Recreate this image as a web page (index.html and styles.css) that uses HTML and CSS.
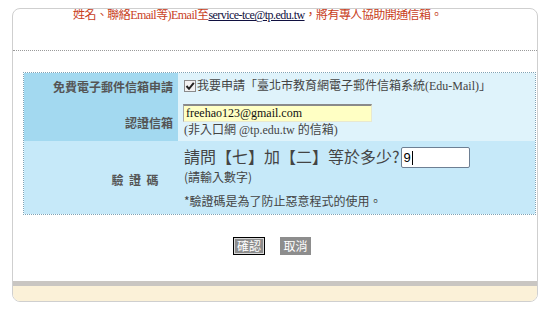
FILE: index.html
```html
<!DOCTYPE html>
<html lang="zh-Hant">
<head>
<meta charset="utf-8">
<title>免費電子郵件信箱申請</title>
<link rel="stylesheet" href="styles.css">
</head>
<body>
<div class="panel">
  <div class="notice">姓名、聯絡Email等)Email至<a class="mail-link" href="#">service-tce@tp.edu.tw</a>，將有專人協助開通信箱。</div>
  <div class="divider"></div>
  <form class="apply-form">
    <div class="label label-dark row1">免費電子郵件信箱申請</div>
    <div class="field field-light row1">
      <span class="checkbox"><svg width="10" height="10" viewBox="0 0 10 10"><path d="M1.5 5 L4 7.8 L8.8 1.8" fill="none" stroke="#222" stroke-width="2"/></svg></span><span class="check-text">我要申請「臺北市教育網電子郵件信箱系統(Edu-Mail)」</span>
    </div>
    <div class="label label-dark row2">認證信箱</div>
    <div class="field field-light row2">
      <div class="email-input">freehao123@gmail.com</div>
      <div class="hint">(非入口網 @tp.edu.tw 的信箱)</div>
    </div>
    <div class="label label-mid label-spaced row3"><span>驗證碼</span></div>
    <div class="field field-mid row3">
      <div class="question"><span class="question-text">請問【七】加【二】等於多少?</span><span class="captcha-input">9<span class="caret"></span></span></div>
      <div class="hint small">(請輸入數字)</div>
      <div class="hint note">*驗證碼是為了防止惡意程式的使用。</div>
    </div>
  </form>
  <div class="actions">
    <span class="btn btn-focus">確認</span>
    <span class="btn">取消</span>
  </div>
  <div class="spacer"></div>
  <div class="footer-bar"></div>
  <div class="footer-cream"></div>
</div>
</body>
</html>
```

FILE: styles.css
```css
html, body {
  margin: 0;
  padding: 0;
  background: #ffffff;
}

body {
  font-family: "Liberation Serif", "Noto Sans CJK TC", serif;
  font-size: 12px;
  color: #444;
}

.panel {
  box-sizing: border-box;
  margin: 8px 0 0 12px;
  width: 526px;
  height: 294px;
  border: 1px solid #cfcfcf;
  border-radius: 8px;
  overflow: hidden;
  display: flex;
  flex-direction: column;
  background: #fff;
}

.notice {
  height: 41px;
  padding-left: 60px;
  line-height: 12px;
  color: #c8401c;
  white-space: nowrap;
  letter-spacing: -0.55px;
}

.mail-link {
  color: #101040;
  text-decoration: underline;
}

.divider {
  border-top: 1px dotted #9a9a9a;
}

.apply-form {
  margin: 21px 1px 0 10px;
  border: 1px dotted #7fa3b5;
  display: grid;
  grid-template-columns: 154px 1fr;
}

.label {
  display: flex;
  align-items: center;
  justify-content: flex-end;
  padding-right: 5px;
  font-family: "Noto Sans CJK TC", sans-serif;
  font-weight: bold;
  color: #555;
  font-size: 12px;
}

.label-dark {
  background: #a3d9f0;
}

.label-mid {
  background: #c6e9f9;
}

.label-spaced {
  padding-right: 14px;
  padding-top: 4px;
  letter-spacing: 5.5px;
}

.field {
  padding-left: 6px;
}

.field-light {
  background: #dff3fb;
}

.field-mid {
  background: #c6e9f9;
}

.row1.label {
  padding-top: 2px;
}

.row1.field {
  height: 24px;
  box-sizing: border-box;
  padding-top: 6px;
  display: flex;
  align-items: flex-start;
  line-height: 14px;
}

.checkbox {
  box-sizing: border-box;
  width: 12px;
  height: 12px;
  margin-top: 1px;
  margin-right: 1px;
  border: 1px solid #8a8a8a;
  background: #f2f2f2;
  display: flex;
  align-items: center;
  justify-content: center;
}

.check-text {
  color: #444;
  white-space: nowrap;
}

.row2.label {
  padding-top: 6px;
}

.row2.field {
  height: 44px;
  box-sizing: border-box;
  padding-top: 7px;
}

.email-input {
  box-sizing: border-box;
  width: 189px;
  height: 18px;
  margin-left: -1px;
  background: #ffffc4;
  border-top: 2px solid #8a8a8a;
  border-left: 1px solid #a8a8a8;
  border-right: 1px solid #e8e8d0;
  border-bottom: 1px solid #e8e8d0;
  padding-left: 2px;
  line-height: 14px;
  color: #111;
  font-size: 12px;
}

.hint {
  margin-top: 1px;
  line-height: 14px;
  color: #444;
  white-space: nowrap;
}

.row3.field {
  height: 73px;
  box-sizing: border-box;
  padding-top: 6px;
}

.question {
  display: flex;
  align-items: flex-start;
  height: 21px;
  white-space: nowrap;
}

.question-text {
  font-family: "Noto Sans CJK TC", sans-serif;
  font-size: 16px;
  line-height: 18px;
  color: #444;
}

.captcha-input {
  box-sizing: border-box;
  margin-left: 1px;
  width: 69px;
  height: 21px;
  background: #fff;
  border: 1px solid #6d7f93;
  border-radius: 2px;
  font-family: "Liberation Sans", sans-serif;
  font-size: 13px;
  color: #000;
  line-height: 19px;
  padding-left: 2px;
  display: flex;
  align-items: center;
}

.caret {
  display: inline-block;
  width: 1px;
  height: 14px;
  background: #000;
  margin-left: 1px;
}

.hint.small {
  margin-top: 2px;
  line-height: 13px;
  font-family: "Noto Sans CJK TC", sans-serif;
}

.hint.note {
  margin-top: 11px;
  line-height: 13px;
  font-family: "Noto Sans CJK TC", sans-serif;
}

.actions {
  margin-top: 22px;
  display: flex;
  justify-content: center;
  gap: 15px;
  padding-right: 6px;
}

.btn {
  box-sizing: border-box;
  height: 18px;
  width: 31px;
  background: #8d8d8d;
  color: #fff;
  font-family: "Noto Sans CJK TC", sans-serif;
  font-size: 12px;
  line-height: 16px;
  text-align: center;
  border: 1px solid #8d8d8d;
}

.btn-focus {
  width: 32px;
  border: 1px solid #000;
  box-shadow: inset 0 0 0 1px #d8d8d8;
}

.spacer {
  flex: 1;
}

.footer-bar {
  height: 5px;
  background: #c9c6c2;
}

.footer-cream {
  height: 15px;
  background: #fbf1d8;
}
```
